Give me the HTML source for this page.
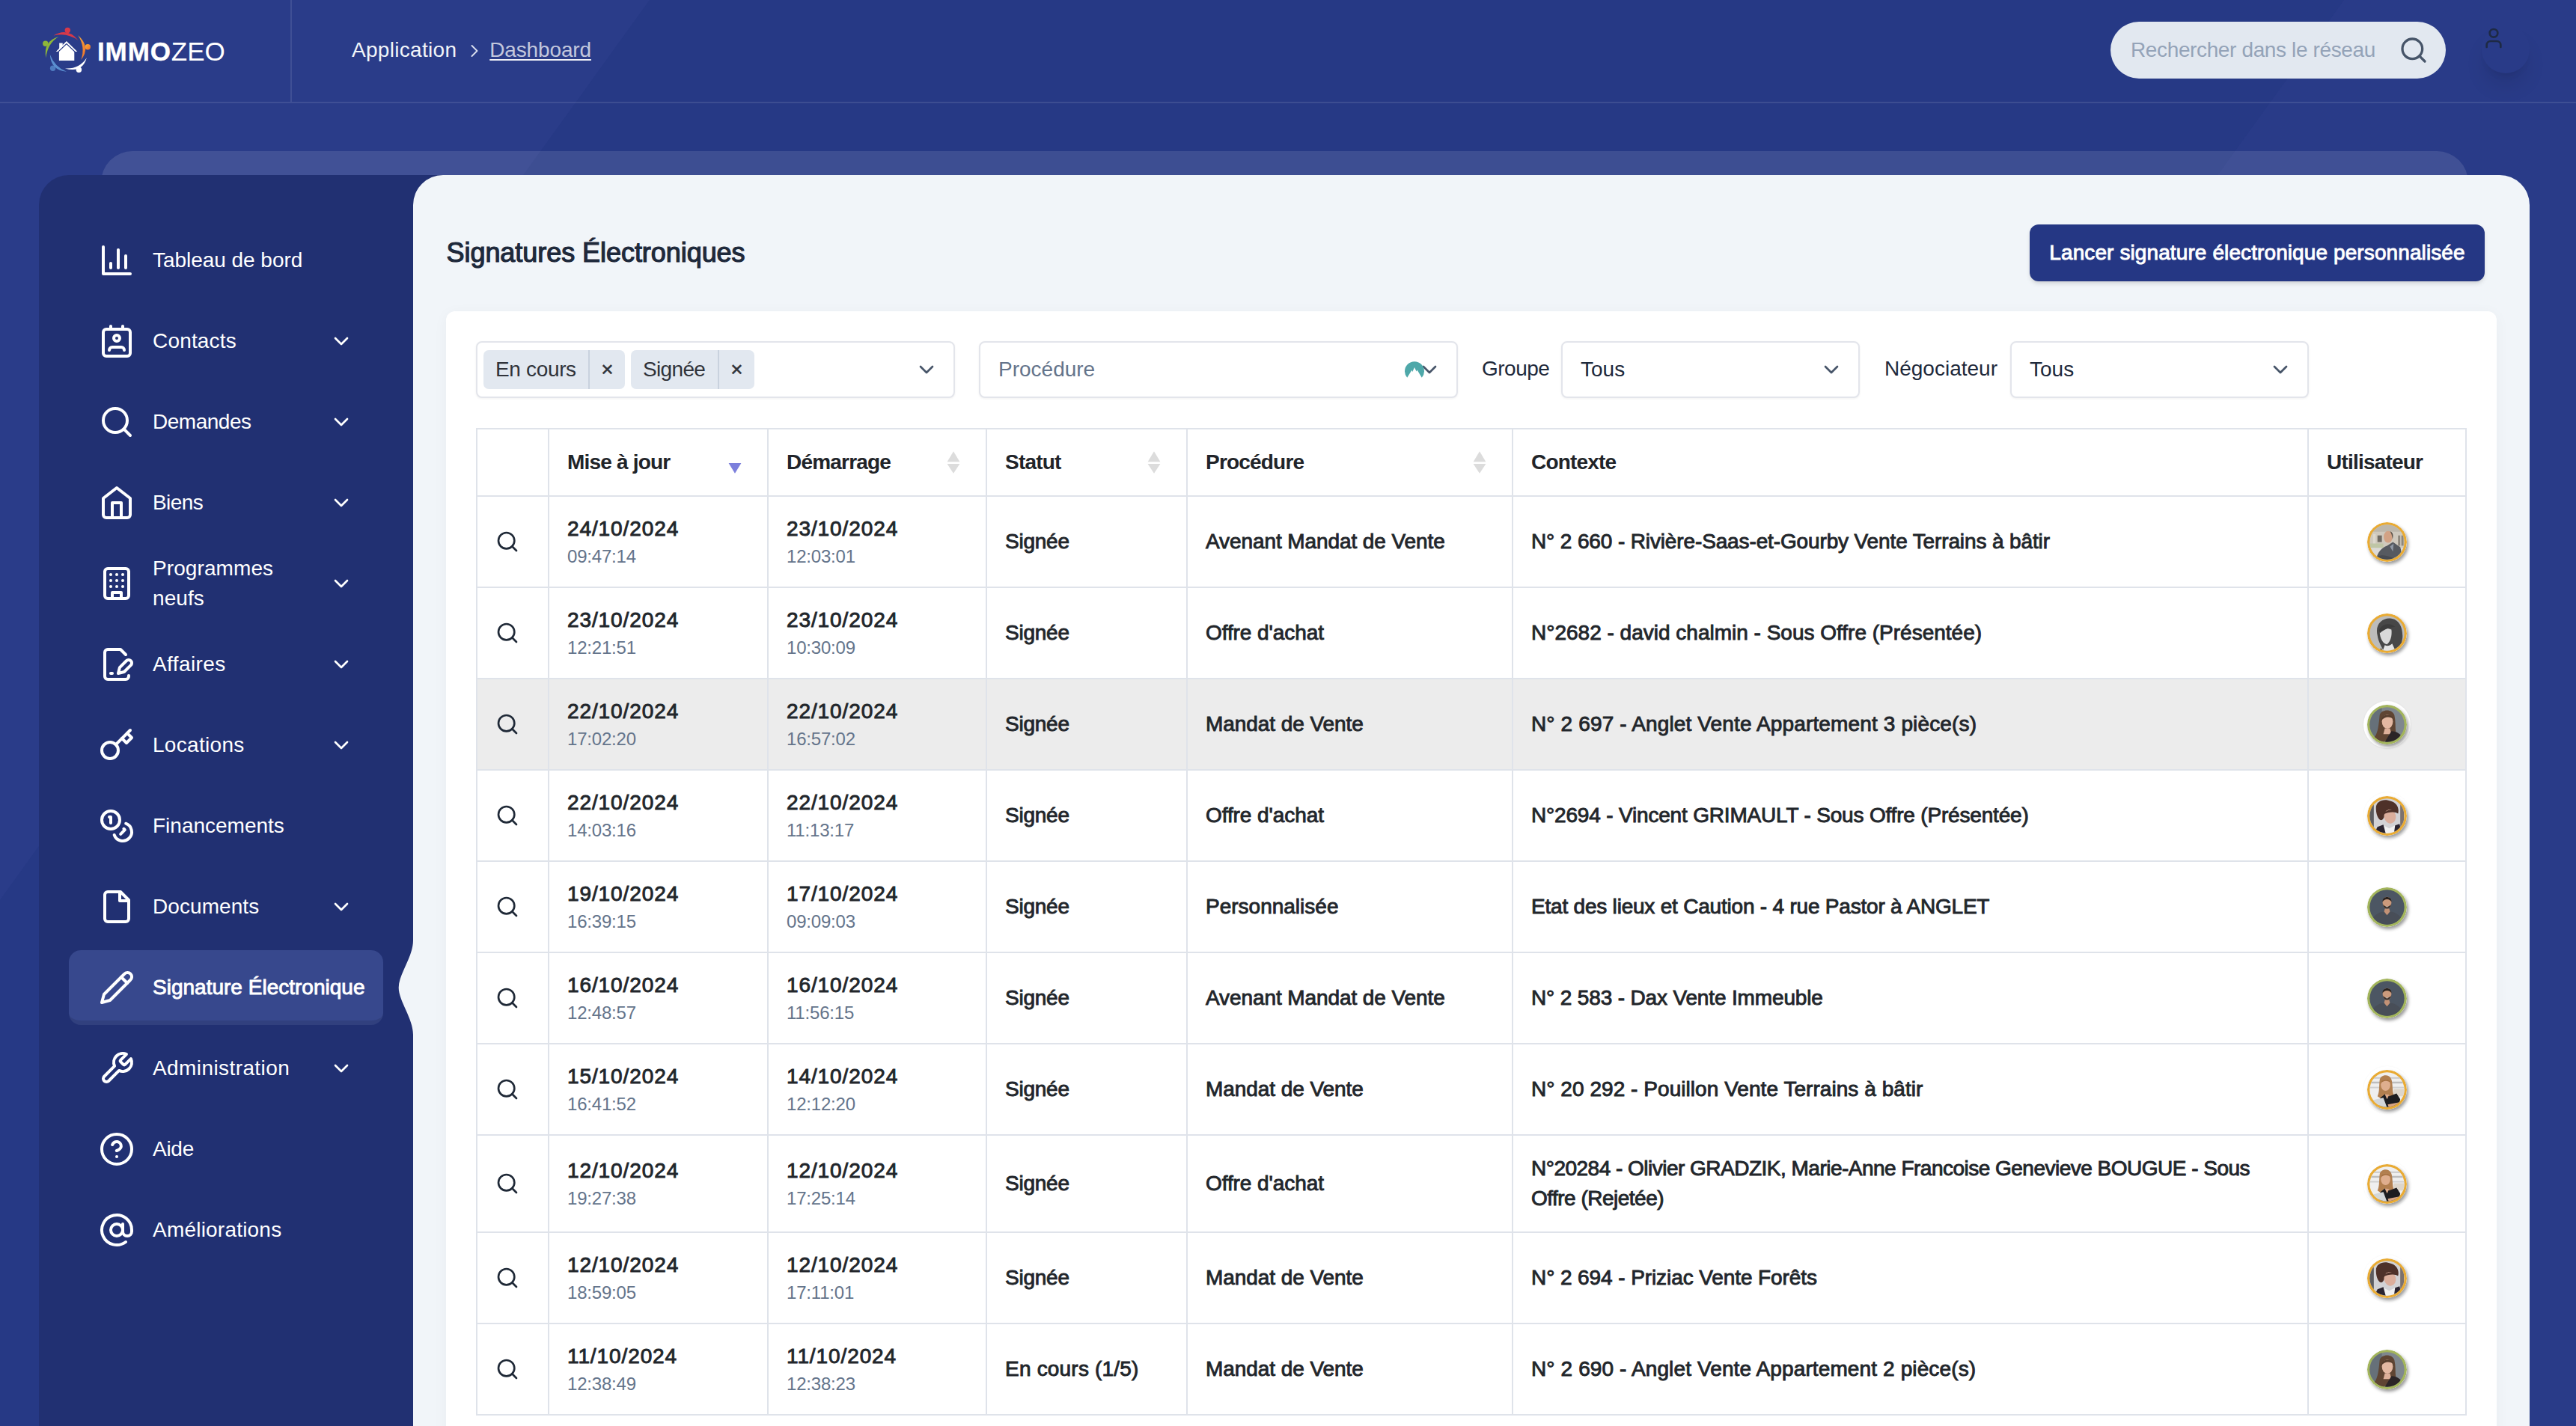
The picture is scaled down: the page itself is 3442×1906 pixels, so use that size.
<!DOCTYPE html>
<html lang="fr"><head><meta charset="utf-8"><title>IMMOZEO - Signatures Électroniques</title>
<style>
*{box-sizing:border-box}
html,body{margin:0;padding:0}
body{width:3442px;height:1906px;overflow:hidden;position:relative;background:#263985;font-family:"Liberation Sans",sans-serif;font-size:28px;color:#1e293b}
.abs{position:absolute}
.ic{display:block}
#bg{position:absolute;left:0;top:0}
#topbar{position:absolute;left:0;top:0;width:3442px;height:138px;border-bottom:2px solid rgba(255,255,255,.1)}
#logo{position:absolute;left:0;top:0;width:390px;height:136px;border-right:2px solid rgba(255,255,255,.1)}
#logotxt{position:absolute;left:130px;top:47px;-webkit-text-stroke:.4px #fff;font-size:35px;line-height:44px;color:#fff;font-weight:700;white-space:nowrap;letter-spacing:.9px}
#logotxt span{font-weight:400;letter-spacing:0;-webkit-text-stroke:0}
#bc{position:absolute;left:470px;top:46.6px;height:40px;line-height:40px;color:#f1f5f9;white-space:nowrap;font-size:28px}
#bc .cur{color:rgba(255,255,255,.72);text-decoration:underline;text-decoration-thickness:2px;text-underline-offset:3px;text-decoration-color:rgba(255,255,255,.92);letter-spacing:-.15px}
#bc .app{letter-spacing:.3px}
#search{position:absolute;left:2820px;top:29px;width:448px;height:76px;border-radius:38px;background:#e2e8f0}
#search .ph{position:absolute;left:27px;top:16px;line-height:44px;font-size:28px;color:#94a3b8;white-space:nowrap;letter-spacing:-.37px}
#search svg{position:absolute;left:385px;top:18px;color:#475569}
#usr{position:absolute;left:3316px;top:34px;width:64px;height:64px;border-radius:50%;box-shadow:0 20px 30px -6px rgba(0,0,0,.12),0 8px 12px -8px rgba(0,0,0,.1)}
#usr svg{position:absolute;left:0;top:1px;color:#1e2a44}
#strip{position:absolute;left:135px;top:202px;width:3163px;height:80px;border-radius:42px 42px 0 0;background:rgba(255,255,255,.11)}
#side{position:absolute;left:52px;top:234px;width:540px;height:1700px;border-radius:40px 0 0 0;background:#213072}
#content{position:absolute;left:552px;top:234px;width:2828px;height:1800px;border-radius:40px;background:#f1f5f9}
.mi{position:absolute;left:92px;width:420px;height:100px;border-radius:16px;color:#fff;font-size:28px;line-height:40px}
.mi .ico{position:absolute;left:40px;top:26px}
.mi .t{position:absolute;left:112px;top:50%;transform:translateY(-50%);white-space:nowrap}
.mi .ch{position:absolute;left:348px;top:34px}
.mi.act{background:#37488d;font-weight:400}
.mi.act:before{content:"";box-sizing:border-box;position:absolute;left:0;top:0;width:100%;height:100%;border-radius:16px;border-bottom:6px solid rgba(0,0,0,.1)}
.mi.act .t{-webkit-text-stroke:.9px #fff}
#notch{position:absolute;left:532px;top:1254.7px}
h2{position:absolute;left:596.5px;top:313.5px;margin:0;font-size:36px;line-height:48px;font-weight:400;-webkit-text-stroke:1.2px #1e293b;letter-spacing:-.05px;color:#1e293b;white-space:nowrap}
#btn{position:absolute;left:2712px;top:300px;width:608px;height:76px;border-radius:12px;background:#253784;color:#fff;text-align:center;line-height:75px;letter-spacing:.1px;font-size:28px;-webkit-text-stroke:.9px #fff;white-space:nowrap;box-shadow:0 4px 6px -1px rgba(0,0,0,.12),0 2px 4px -2px rgba(0,0,0,.1)}
#box{position:absolute;left:596px;top:416px;width:2740px;height:1600px;border-radius:12px;background:#fff;box-shadow:0 3px 20px rgba(0,0,0,.04)}
.sel{position:absolute;top:456px;height:76px;border:2px solid #e3e5eb;border-radius:8px;background:#fff;box-shadow:0 1px 3px rgba(0,0,0,.06);font-size:28px;line-height:71px;color:#1e293b;white-space:nowrap}
.sel .v{position:absolute;left:24px;top:0}
.sel .ph{color:#64748b}
.sel svg{position:absolute;top:20.3px;color:#475569;margin-left:1px}
.lbl{position:absolute;top:473px;line-height:40px;font-size:28px;color:#1e293b;white-space:nowrap}
.tag{position:absolute;top:10px;height:52px;border-radius:7px;background:#e2e8f0;line-height:52px;font-size:28px;color:#30333a}
.tag .x{position:absolute;top:0;right:0;width:49px;height:52px;border-left:2px solid #c9d2de;text-align:center;font-size:28px;-webkit-text-stroke:.5px #30333a}
table{position:absolute;left:636px;top:572px;border-collapse:collapse;table-layout:fixed;width:2660px}
td,th{border:2px solid #dfe3ea;padding:0 0 0 24px;text-align:left;vertical-align:middle;font-size:28px;line-height:40px;color:#22262b;font-weight:400}
th{height:90px;font-weight:700;color:#212429;position:relative;letter-spacing:-.8px}
td{-webkit-text-stroke:.9px #22262b;padding-bottom:0;letter-spacing:-.1px}
td.dt{padding-bottom:1px}
td .d{letter-spacing:.9px;position:relative;top:-1.5px}
td .tm{display:block;font-size:24px;line-height:30px;color:#64748b;-webkit-text-stroke:0;margin-top:0;letter-spacing:-.2px}
td.c0{padding:0 0 0 24px}
td.c0 svg{margin:0;color:#1f2937}
td.cu{padding:0;text-align:center}
.av{display:block;margin:0 auto;border-radius:50%;box-shadow:2px 3px 4px rgba(0,0,0,.4)}
.av.fr{box-shadow:2px 3px 4px rgba(0,0,0,.4),0 0 0 5px #fff,0 0 2px 5px rgba(0,0,0,.05)}
.av.ring{box-shadow:2px 3px 4px rgba(0,0,0,.4),0 0 0 5px #fff,0 0 3px 5px rgba(0,0,0,.06)}
tr.hl td{background:#ececec}
td.c0{padding-bottom:0}
.sa{position:absolute;right:34px;top:28px;width:18px;height:32px}
</style></head><body>
<svg id="bg" width="3442" height="1906" viewBox="0 0 3442 1906"><polygon points="0,0 868,0 0,1203" fill="#2a3c89"/><polygon points="3132,0 3442,0 3442,1906 1757,1906" fill="#293b88"/></svg>
<div id="topbar"><div id="logo"><svg class="abs" style="left:50px;top:30px" width="80" height="75" viewBox="50 30 80 75">
<defs><linearGradient id="go" x1="0" y1="0" x2="1" y2="1"><stop offset="0" stop-color="#f6b23c"/><stop offset="1" stop-color="#ee6b2a"/></linearGradient></defs>
<circle cx="90.3" cy="40.4" r="3.7" fill="#d6394a"/><path d="M71.5 47.6 Q90 36 104.6 53.9 Q89 43 71.5 47.6Z" fill="#d6394a"/>
<circle cx="117.3" cy="62.7" r="3.7" fill="url(#go)"/><path d="M104.3 47.3 Q122 63 108.2 80 Q114.5 63 104.3 47.3Z" fill="url(#go)"/>
<circle cx="105.4" cy="93.2" r="3.7" fill="#fff"/><path d="M115.8 77.2 Q110 98 86.8 91.4 Q106 92.5 115.8 77.2Z" fill="#fff"/>
<circle cx="70.6" cy="91.3" r="3.7" fill="#4f7cc0"/><path d="M66.8 73 Q68 94 89 95.8 Q73.5 90 66.8 73Z" fill="#5b8fd0"/>
<circle cx="60.8" cy="58.2" r="3.7" fill="#8db63a"/><path d="M78.4 49.1 Q57.5 55 61.3 77.6 Q63.5 58 78.4 49.1Z" fill="#8db63a"/>
<path d="M74.8 69 L88.9 54.9 L103.3 69 L99.3 69 L99.3 80.9 L78.9 80.9 L78.9 69Z" fill="#fff"/>
<path d="M79.2 57.6h4.5v4.6l-4.5 4.4z" fill="#fff"/>
<path d="M77.5 69.5 L88.9 58.6 L100.4 69.5" fill="none" stroke="#2a3c89" stroke-width="1.1"/>
</svg><div id="logotxt">IMMO<span>ZEO</span></div></div>
<div id="bc"><span class="app">Application</span><svg class="ic " style="display:inline-block;vertical-align:-6px;margin:0 6px 0 10px;color:#dbe0f0" width="28" height="28" viewBox="0 0 24 24" fill="none" stroke="currentColor" stroke-width="1.6" stroke-linecap="round" stroke-linejoin="round"><path d="m9 18 6-6-6-6"/></svg><span class="cur">Dashboard</span></div>
<div id="search"><div class="ph">Rechercher dans le réseau</div><svg class="ic " style="" width="40" height="40" viewBox="0 0 24 24" fill="none" stroke="currentColor" stroke-width="2" stroke-linecap="round" stroke-linejoin="round"><circle cx="11" cy="11" r="8"/><path d="m21 21-4.3-4.3"/></svg></div>
<div id="usr"><svg class="ic " style="" width="32" height="32" viewBox="0 0 24 24" fill="none" stroke="currentColor" stroke-width="2" stroke-linecap="round" stroke-linejoin="round"><path d="M19 21v-2a4 4 0 0 0-4-4H9a4 4 0 0 0-4 4v2"/><circle cx="12" cy="7" r="4"/></svg></div>
</div>
<div id="strip"></div>
<div id="side"></div>
<div id="content"></div>
<div class="mi" style="top:298px"><span class="ico"><svg class="ic " style="" width="48" height="48" viewBox="0 0 24 24" fill="none" stroke="currentColor" stroke-width="2" stroke-linecap="round" stroke-linejoin="round"><path d="M3 3v18h18"/><path d="M18 17V9"/><path d="M13 17V5"/><path d="M8 17v-3"/></svg></span><span class="t" style="letter-spacing:-0.04px">Tableau de bord</span></div>
<div class="mi" style="top:406px"><span class="ico"><svg class="ic " style="" width="48" height="48" viewBox="0 0 24 24" fill="none" stroke="currentColor" stroke-width="2" stroke-linecap="round" stroke-linejoin="round"><path d="M17 18a2 2 0 0 0-2-2H9a2 2 0 0 0-2 2"/><rect width="18" height="18" x="3" y="4" rx="2"/><circle cx="12" cy="10" r="2"/><line x1="8" x2="8" y1="2" y2="4"/><line x1="16" x2="16" y1="2" y2="4"/></svg></span><span class="t" style="letter-spacing:0.17px">Contacts</span><svg class="ic ch" style="" width="32" height="32" viewBox="0 0 24 24" fill="none" stroke="currentColor" stroke-width="2" stroke-linecap="round" stroke-linejoin="round"><path d="m6 9 6 6 6-6"/></svg></div>
<div class="mi" style="top:514px"><span class="ico"><svg class="ic " style="" width="48" height="48" viewBox="0 0 24 24" fill="none" stroke="currentColor" stroke-width="2" stroke-linecap="round" stroke-linejoin="round"><circle cx="11" cy="11" r="8"/><path d="m21 21-4.3-4.3"/></svg></span><span class="t" style="letter-spacing:-0.49px">Demandes</span><svg class="ic ch" style="" width="32" height="32" viewBox="0 0 24 24" fill="none" stroke="currentColor" stroke-width="2" stroke-linecap="round" stroke-linejoin="round"><path d="m6 9 6 6 6-6"/></svg></div>
<div class="mi" style="top:622px"><span class="ico"><svg class="ic " style="" width="48" height="48" viewBox="0 0 24 24" fill="none" stroke="currentColor" stroke-width="2" stroke-linecap="round" stroke-linejoin="round"><path d="m3 9 9-7 9 7v11a2 2 0 0 1-2 2H5a2 2 0 0 1-2-2z"/><polyline points="9 22 9 12 15 12 15 22"/></svg></span><span class="t" style="letter-spacing:-0.60px">Biens</span><svg class="ic ch" style="" width="32" height="32" viewBox="0 0 24 24" fill="none" stroke="currentColor" stroke-width="2" stroke-linecap="round" stroke-linejoin="round"><path d="m6 9 6 6 6-6"/></svg></div>
<div class="mi" style="top:730px"><span class="ico"><svg class="ic " style="" width="48" height="48" viewBox="0 0 24 24" fill="none" stroke="currentColor" stroke-width="2" stroke-linecap="round" stroke-linejoin="round"><rect width="16" height="20" x="4" y="2" rx="2" ry="2"/><path d="M9 22v-4h6v4"/><path d="M8 6h.01"/><path d="M16 6h.01"/><path d="M12 6h.01"/><path d="M12 10h.01"/><path d="M12 14h.01"/><path d="M16 10h.01"/><path d="M16 14h.01"/><path d="M8 10h.01"/><path d="M8 14h.01"/></svg></span><span class="t" style="letter-spacing:0.09px">Programmes<br>neufs</span><svg class="ic ch" style="" width="32" height="32" viewBox="0 0 24 24" fill="none" stroke="currentColor" stroke-width="2" stroke-linecap="round" stroke-linejoin="round"><path d="m6 9 6 6 6-6"/></svg></div>
<div class="mi" style="top:838px"><span class="ico"><svg class="ic " style="" width="48" height="48" viewBox="0 0 24 24" fill="none" stroke="currentColor" stroke-width="2" stroke-linecap="round" stroke-linejoin="round"><path d="M20 19.5v.5a2 2 0 0 1-2 2H6a2 2 0 0 1-2-2V4a2 2 0 0 1 2-2h8.5L18 5.5"/><path d="M8 18h1"/><path d="M18.42 9.61a2.1 2.1 0 1 1 2.97 2.97L16.95 17 13 18l.99-3.95 4.43-4.44Z"/></svg></span><span class="t" style="letter-spacing:0.40px">Affaires</span><svg class="ic ch" style="" width="32" height="32" viewBox="0 0 24 24" fill="none" stroke="currentColor" stroke-width="2" stroke-linecap="round" stroke-linejoin="round"><path d="m6 9 6 6 6-6"/></svg></div>
<div class="mi" style="top:946px"><span class="ico"><svg class="ic " style="" width="48" height="48" viewBox="0 0 24 24" fill="none" stroke="currentColor" stroke-width="2" stroke-linecap="round" stroke-linejoin="round"><circle cx="7.5" cy="15.5" r="5.5"/><path d="m21 2-9.6 9.6"/><path d="m15.5 7.5 3 3L22 7l-3-3"/></svg></span><span class="t" style="letter-spacing:0.30px">Locations</span><svg class="ic ch" style="" width="32" height="32" viewBox="0 0 24 24" fill="none" stroke="currentColor" stroke-width="2" stroke-linecap="round" stroke-linejoin="round"><path d="m6 9 6 6 6-6"/></svg></div>
<div class="mi" style="top:1054px"><span class="ico"><svg class="ic " style="" width="48" height="48" viewBox="0 0 24 24" fill="none" stroke="currentColor" stroke-width="2" stroke-linecap="round" stroke-linejoin="round"><circle cx="8" cy="8" r="6"/><path d="M18.09 10.37A6 6 0 1 1 10.34 18"/><path d="M7 6h1v4"/><path d="m16.71 13.88.7.71-2.82 2.82"/></svg></span><span class="t" style="letter-spacing:0.00px">Financements</span></div>
<div class="mi" style="top:1162px"><span class="ico"><svg class="ic " style="" width="48" height="48" viewBox="0 0 24 24" fill="none" stroke="currentColor" stroke-width="2" stroke-linecap="round" stroke-linejoin="round"><path d="M14.5 2H6a2 2 0 0 0-2 2v16a2 2 0 0 0 2 2h12a2 2 0 0 0 2-2V7.5L14.5 2z"/><polyline points="14 2 14 8 20 8"/></svg></span><span class="t" style="letter-spacing:0.07px">Documents</span><svg class="ic ch" style="" width="32" height="32" viewBox="0 0 24 24" fill="none" stroke="currentColor" stroke-width="2" stroke-linecap="round" stroke-linejoin="round"><path d="m6 9 6 6 6-6"/></svg></div>
<div class="mi act" style="top:1270px"><span class="ico"><svg class="ic " style="" width="48" height="48" viewBox="0 0 24 24" fill="none" stroke="currentColor" stroke-width="2" stroke-linecap="round" stroke-linejoin="round"><path d="M17 3a2.85 2.83 0 1 1 4 4L7.5 20.5 2 22l1.5-5.5Z"/><path d="m15 5 4 4"/></svg></span><span class="t" style="letter-spacing:0.01px">Signature Électronique</span></div>
<div class="mi" style="top:1378px"><span class="ico"><svg class="ic " style="" width="48" height="48" viewBox="0 0 24 24" fill="none" stroke="currentColor" stroke-width="2" stroke-linecap="round" stroke-linejoin="round"><path d="M14.7 6.3a1 1 0 0 0 0 1.4l1.6 1.6a1 1 0 0 0 1.4 0l3.77-3.77a6 6 0 0 1-7.94 7.94l-6.91 6.91a2.12 2.12 0 0 1-3-3l6.91-6.91a6 6 0 0 1 7.94-7.94l-3.76 3.76z"/></svg></span><span class="t" style="letter-spacing:0.41px">Administration</span><svg class="ic ch" style="" width="32" height="32" viewBox="0 0 24 24" fill="none" stroke="currentColor" stroke-width="2" stroke-linecap="round" stroke-linejoin="round"><path d="m6 9 6 6 6-6"/></svg></div>
<div class="mi" style="top:1486px"><span class="ico"><svg class="ic " style="" width="48" height="48" viewBox="0 0 24 24" fill="none" stroke="currentColor" stroke-width="2" stroke-linecap="round" stroke-linejoin="round"><circle cx="12" cy="12" r="10"/><path d="M9.09 9a3 3 0 0 1 5.83 1c0 2-3 3-3 3"/><path d="M12 17h.01"/></svg></span><span class="t" style="letter-spacing:-0.27px">Aide</span></div>
<div class="mi" style="top:1594px"><span class="ico"><svg class="ic " style="" width="48" height="48" viewBox="0 0 24 24" fill="none" stroke="currentColor" stroke-width="2" stroke-linecap="round" stroke-linejoin="round"><circle cx="12" cy="12" r="4"/><path d="M16 8v5a3 3 0 0 0 6 0v-1a10 10 0 1 0-4 8"/></svg></span><span class="t" style="letter-spacing:0.21px">Améliorations</span></div>
<svg id="notch" width="24" height="130" viewBox="0 0 24 130"><path d="M20 2 C20 24 0.7 47 0.7 65 C0.7 83 20 106 20 128 L24 128 L24 2 Z" fill="#f1f5f9"/></svg>
<h2>Signatures Électroniques</h2>
<div id="btn">Lancer signature électronique personnalisée</div>
<div id="box"></div>
<div class="sel" style="left:636px;width:640px"><div class="tag" style="left:8px;width:189px"><span style="padding-left:16px;letter-spacing:-.34px">En cours</span><span class="x">×</span></div><div class="tag" style="left:205px;width:165px"><span style="padding-left:16px;letter-spacing:-.66px">Signée</span><span class="x">×</span></div><svg class="ic " style="left:583px" width="32" height="32" viewBox="0 0 24 24" fill="none" stroke="currentColor" stroke-width="2" stroke-linecap="round" stroke-linejoin="round"><path d="m6 9 6 6 6-6"/></svg></div>
<div class="sel" style="left:1308px;width:640px"><div class="v ph">Procédure</div><svg class="ic " style="left:583px" width="32" height="32" viewBox="0 0 24 24" fill="none" stroke="currentColor" stroke-width="2" stroke-linecap="round" stroke-linejoin="round"><path d="m6 9 6 6 6-6"/></svg><svg style="left:566px;top:25px" width="26" height="26" viewBox="0 0 26 26"><path d="M3.2 21.8 A13 13 0 1 1 22.8 21.8 L16.6 11.6 L15.6 13.6 L13 8 L10.3 14 L9.4 11.8 Z" fill="#4ea8a9"/></svg></div>
<div class="lbl" style="left:1980px;letter-spacing:-.5px">Groupe</div>
<div class="sel" style="left:2086px;width:399px"><div class="v">Tous</div><svg class="ic " style="left:342px" width="32" height="32" viewBox="0 0 24 24" fill="none" stroke="currentColor" stroke-width="2" stroke-linecap="round" stroke-linejoin="round"><path d="m6 9 6 6 6-6"/></svg></div>
<div class="lbl" style="left:2518px">Négociateur</div>
<div class="sel" style="left:2686px;width:399px"><div class="v">Tous</div><svg class="ic " style="left:342px" width="32" height="32" viewBox="0 0 24 24" fill="none" stroke="currentColor" stroke-width="2" stroke-linecap="round" stroke-linejoin="round"><path d="m6 9 6 6 6-6"/></svg></div>
<table><colgroup><col style="width:96px"><col style="width:293px"><col style="width:292px"><col style="width:268px"><col style="width:435px"><col style="width:1063px"><col style="width:211px"></colgroup>
<tr><th></th><th>Mise à jour<svg class="sa" viewBox="0 0 18 32"><path d="M0.6 17h16.8l-8.4 13.8z" fill="#7c7fdc"/></svg></th><th>Démarrage<svg class="sa" viewBox="0 0 18 32"><path d="M0.6 15.3h16.8l-8.4-14z" fill="#dcdcdc"/><path d="M0.6 18h16.8l-8.4 12.8z" fill="#dcdcdc"/></svg></th><th>Statut<svg class="sa" viewBox="0 0 18 32"><path d="M0.6 15.3h16.8l-8.4-14z" fill="#dcdcdc"/><path d="M0.6 18h16.8l-8.4 12.8z" fill="#dcdcdc"/></svg></th><th>Procédure<svg class="sa" viewBox="0 0 18 32"><path d="M0.6 15.3h16.8l-8.4-14z" fill="#dcdcdc"/><path d="M0.6 18h16.8l-8.4 12.8z" fill="#dcdcdc"/></svg></th><th>Contexte</th><th>Utilisateur</th></tr>
<tr style="height:122px"><td class="c0"><svg class="ic " style="" width="32" height="32" viewBox="0 0 24 24" fill="none" stroke="currentColor" stroke-width="2" stroke-linecap="round" stroke-linejoin="round"><circle cx="11" cy="11" r="8"/><path d="m21 21-4.3-4.3"/></svg></td><td class="dt"><span class="d">24/10/2024</span><span class="tm">09:47:14</span></td><td class="dt"><span class="d">23/10/2024</span><span class="tm">12:03:01</span></td><td><span style="letter-spacing:-0.24px">Signée</span></td><td><span style="letter-spacing:-0.09px">Avenant Mandat de Vente</span></td><td style="padding-right:24px"><span style="letter-spacing:-0.13px">N° 2 660 - Rivière-Saas-et-Gourby Vente Terrains à bâtir</span></td><td class="cu"><svg class="av" width="53" height="53" viewBox="0 0 54 54"><clipPath id="av1"><circle cx="27" cy="27" r="23.6"/></clipPath><circle cx="27" cy="27" r="27" fill="#e9ab34"/><g clip-path="url(#av1)"><rect width="54" height="54" fill="#cfc9bd"/><rect y="3" width="54" height="10" fill="#bdb7ab"/><rect x="8" y="16" width="3.5" height="22" fill="#ddd8cd"/><rect x="14" y="18" width="6" height="9" fill="#6f6a62"/><rect x="42" y="18" width="3" height="14" fill="#8d877c"/><rect x="46.5" y="18" width="3" height="14" fill="#8d877c"/><rect y="29" width="22" height="6" fill="#bfc6a6"/><rect y="35" width="54" height="19" fill="#dcdad6"/><path d="M12 52 C13 42 20 34 27 32 L35 27 L45 34 C47 40 47 48 46 54 L20 56 Z" fill="#565a60"/><path d="M31 33 L36 29 L35 40 Z" fill="#8f98a5"/><path d="M14 47 C20 43 30 46 38 50 L30 54 L16 53 Z" fill="#474b51"/><ellipse cx="28.5" cy="20" rx="6" ry="8" fill="#d2a284"/><path d="M31 12.5 C35 13 36 18 34.5 23 C34 19 33 15 31 12.5Z" fill="#5d5248"/></g></svg></td></tr>
<tr style="height:122px"><td class="c0"><svg class="ic " style="" width="32" height="32" viewBox="0 0 24 24" fill="none" stroke="currentColor" stroke-width="2" stroke-linecap="round" stroke-linejoin="round"><circle cx="11" cy="11" r="8"/><path d="m21 21-4.3-4.3"/></svg></td><td class="dt"><span class="d">23/10/2024</span><span class="tm">12:21:51</span></td><td class="dt"><span class="d">23/10/2024</span><span class="tm">10:30:09</span></td><td><span style="letter-spacing:-0.24px">Signée</span></td><td><span style="letter-spacing:-0.08px">Offre d'achat</span></td><td style="padding-right:24px"><span style="letter-spacing:0.00px">N°2682 - david chalmin - Sous Offre (Présentée)</span></td><td class="cu"><svg class="av" width="53" height="53" viewBox="0 0 54 54"><clipPath id="av2"><circle cx="27" cy="27" r="23.6"/></clipPath><circle cx="27" cy="27" r="27" fill="#e9ab34"/><g clip-path="url(#av2)"><rect width="54" height="54" fill="#bcbcbc"/><path d="M14 30 C10 14 22 5 33 7 C46 9 49 24 48 34 C47 42 44 48 40 52 L30 46 L22 50 C19 44 15 38 14 30Z" fill="#474747"/><path d="M17 24 C20 20 28 19 33 22 C34 30 32 38 27 42 C22 42 17 34 17 24Z" fill="#d9d9d9"/><path d="M16 23 C20 14 30 12 38 18 C33 19 24 20 17 27Z" fill="#3c3c3c"/><path d="M20 54 L24 43 C27 45 31 44 34 41 L40 54Z" fill="#e4e4e4"/><path d="M14 54 L19 47 L22 54Z M38 54 L40 47 L46 52Z" fill="#222"/></g></svg></td></tr>
<tr class="hl" style="height:122px"><td class="c0"><svg class="ic " style="" width="32" height="32" viewBox="0 0 24 24" fill="none" stroke="currentColor" stroke-width="2" stroke-linecap="round" stroke-linejoin="round"><circle cx="11" cy="11" r="8"/><path d="m21 21-4.3-4.3"/></svg></td><td class="dt"><span class="d">22/10/2024</span><span class="tm">17:02:20</span></td><td class="dt"><span class="d">22/10/2024</span><span class="tm">16:57:02</span></td><td><span style="letter-spacing:-0.24px">Signée</span></td><td><span style="letter-spacing:-0.06px">Mandat de Vente</span></td><td style="padding-right:24px"><span style="letter-spacing:0.14px">N° 2 697 - Anglet Vente Appartement 3 pièce(s)</span></td><td class="cu"><svg class="av ring" width="53" height="53" viewBox="0 0 54 54"><clipPath id="av3"><circle cx="27" cy="27" r="23.6"/></clipPath><circle cx="27" cy="27" r="27" fill="#a3b55c"/><g clip-path="url(#av3)"><rect width="54" height="54" fill="#7f878e"/><rect width="20" height="54" fill="#667079"/><path d="M17 14 C19 6 34 5 37 14 C39 22 38 30 39 38 L30 46 L20 52 L10 44 C15 38 16 24 17 14Z" fill="#5f4533"/><ellipse cx="27.5" cy="23" rx="7.5" ry="9.5" fill="#e3b8a2"/><path d="M19 22 C20 12 33 11 36 20 C32 16 24 15 19 22Z" fill="#553d2d"/><path d="M24 32 L31 32 L33 40 L22 40Z" fill="#ddb09a"/><path d="M22 54 L28 44 L33 36 C40 36 46 40 48 46 L44 54Z" fill="#2b2527"/><path d="M10 44 C15 40 20 40 24 42 L22 54 L12 54Z" fill="#5f4533"/></g></svg></td></tr>
<tr style="height:122px"><td class="c0"><svg class="ic " style="" width="32" height="32" viewBox="0 0 24 24" fill="none" stroke="currentColor" stroke-width="2" stroke-linecap="round" stroke-linejoin="round"><circle cx="11" cy="11" r="8"/><path d="m21 21-4.3-4.3"/></svg></td><td class="dt"><span class="d">22/10/2024</span><span class="tm">14:03:16</span></td><td class="dt"><span class="d">22/10/2024</span><span class="tm">11:13:17</span></td><td><span style="letter-spacing:-0.24px">Signée</span></td><td><span style="letter-spacing:-0.08px">Offre d'achat</span></td><td style="padding-right:24px"><span style="letter-spacing:-0.18px">N°2694 - Vincent GRIMAULT - Sous Offre (Présentée)</span></td><td class="cu"><svg class="av fr" width="53" height="53" viewBox="0 0 54 54"><clipPath id="av4"><circle cx="27" cy="27" r="23.6"/></clipPath><circle cx="27" cy="27" r="27" fill="#e9ab34"/><g clip-path="url(#av4)"><rect width="54" height="54" fill="#d2d2d5"/><rect width="9" height="54" fill="#5c5c60"/><rect x="45" width="5" height="54" fill="#7b716d"/><path d="M12 16 C12 6 24 3 32 7 C40 9 44 16 42 24 C36 20 28 20 24 26 C22 32 20 34 17 32 C13 28 12 22 12 16Z" fill="#4e3129"/><ellipse cx="31" cy="28" rx="8" ry="9.5" fill="#dbae9c" transform="rotate(-12 31 28)"/><path d="M22 25 C25 18 36 17 41 23 C35 21 28 22 22 25Z" fill="#4e3129"/><path d="M18 54 L22 40 L30 44 L38 40 L42 54Z" fill="#f1f1f1"/><path d="M8 54 L14 42 L22 39 L26 54Z M36 54 L38 40 L44 38 L48 54Z" fill="#2a2430"/></g></svg></td></tr>
<tr style="height:122px"><td class="c0"><svg class="ic " style="" width="32" height="32" viewBox="0 0 24 24" fill="none" stroke="currentColor" stroke-width="2" stroke-linecap="round" stroke-linejoin="round"><circle cx="11" cy="11" r="8"/><path d="m21 21-4.3-4.3"/></svg></td><td class="dt"><span class="d">19/10/2024</span><span class="tm">16:39:15</span></td><td class="dt"><span class="d">17/10/2024</span><span class="tm">09:09:03</span></td><td><span style="letter-spacing:-0.24px">Signée</span></td><td><span style="letter-spacing:0.00px">Personnalisée</span></td><td style="padding-right:24px"><span style="letter-spacing:-0.21px">Etat des lieux et Caution - 4 rue Pastor à ANGLET</span></td><td class="cu"><svg class="av" width="53" height="53" viewBox="0 0 54 54"><clipPath id="av5"><circle cx="27" cy="27" r="23.6"/></clipPath><circle cx="27" cy="27" r="27" fill="#a3b55c"/><g clip-path="url(#av5)"><rect width="54" height="54" fill="#4c5663"/><path d="M4 54 C5 40 14 34 22 33 L32 33 C40 34 49 40 50 54Z" fill="#484e58"/><path d="M23 33 L27 38 L31 33 L30 29 L24 29Z" fill="#c39276"/><ellipse cx="27" cy="21" rx="6" ry="8" fill="#cb9a7c"/><path d="M21 20 C20 11 34 11 33 20 C31 15 23 15 21 20Z" fill="#2b231e"/><path d="M21.5 23 C22 31 32 31 32.5 23 C31 27 23 27 21.5 23Z" fill="#3a2e27"/><path d="M24.5 25 C26 26.5 28 26.5 29.5 25 C28 27.5 26 27.5 24.5 25Z" fill="#f2ece8"/></g></svg></td></tr>
<tr style="height:122px"><td class="c0"><svg class="ic " style="" width="32" height="32" viewBox="0 0 24 24" fill="none" stroke="currentColor" stroke-width="2" stroke-linecap="round" stroke-linejoin="round"><circle cx="11" cy="11" r="8"/><path d="m21 21-4.3-4.3"/></svg></td><td class="dt"><span class="d">16/10/2024</span><span class="tm">12:48:57</span></td><td class="dt"><span class="d">16/10/2024</span><span class="tm">11:56:15</span></td><td><span style="letter-spacing:-0.24px">Signée</span></td><td><span style="letter-spacing:-0.09px">Avenant Mandat de Vente</span></td><td style="padding-right:24px"><span style="letter-spacing:-0.15px">N° 2 583 - Dax Vente Immeuble</span></td><td class="cu"><svg class="av" width="53" height="53" viewBox="0 0 54 54"><clipPath id="av6"><circle cx="27" cy="27" r="23.6"/></clipPath><circle cx="27" cy="27" r="27" fill="#a3b55c"/><g clip-path="url(#av6)"><rect width="54" height="54" fill="#4c5663"/><path d="M4 54 C5 40 14 34 22 33 L32 33 C40 34 49 40 50 54Z" fill="#484e58"/><path d="M23 33 L27 38 L31 33 L30 29 L24 29Z" fill="#c39276"/><ellipse cx="27" cy="21" rx="6" ry="8" fill="#cb9a7c"/><path d="M21 20 C20 11 34 11 33 20 C31 15 23 15 21 20Z" fill="#2b231e"/><path d="M21.5 23 C22 31 32 31 32.5 23 C31 27 23 27 21.5 23Z" fill="#3a2e27"/><path d="M24.5 25 C26 26.5 28 26.5 29.5 25 C28 27.5 26 27.5 24.5 25Z" fill="#f2ece8"/></g></svg></td></tr>
<tr style="height:122px"><td class="c0"><svg class="ic " style="" width="32" height="32" viewBox="0 0 24 24" fill="none" stroke="currentColor" stroke-width="2" stroke-linecap="round" stroke-linejoin="round"><circle cx="11" cy="11" r="8"/><path d="m21 21-4.3-4.3"/></svg></td><td class="dt"><span class="d">15/10/2024</span><span class="tm">16:41:52</span></td><td class="dt"><span class="d">14/10/2024</span><span class="tm">12:12:20</span></td><td><span style="letter-spacing:-0.24px">Signée</span></td><td><span style="letter-spacing:-0.06px">Mandat de Vente</span></td><td style="padding-right:24px"><span style="letter-spacing:0.05px">N° 20 292 - Pouillon Vente Terrains à bâtir</span></td><td class="cu"><svg class="av fr" width="53" height="53" viewBox="0 0 54 54"><clipPath id="av7"><circle cx="27" cy="27" r="23.6"/></clipPath><circle cx="27" cy="27" r="27" fill="#e9ab34"/><g clip-path="url(#av7)"><rect width="54" height="54" fill="#efefef"/><rect y="10" width="54" height="2" fill="#c9c9c9"/><rect y="16" width="54" height="2.5" fill="#bdbdbd"/><rect y="23" width="54" height="2" fill="#d0d0d0"/><rect x="36" y="26" width="18" height="10" fill="#ddd6cb"/><path d="M17 14 C18 6 30 5 33 13 C35 20 34 28 36 34 L30 40 L20 40 L14 36 C17 30 16 22 17 14Z" fill="#b27f4f"/><ellipse cx="25" cy="20.5" rx="6.5" ry="8" fill="#dfae8e"/><path d="M18 19 C19 11 30 10 32 18 C28 14 22 14 18 19Z" fill="#a87445"/><path d="M16 54 L18 38 L24 33 L30 36 L40 32 L45 40 L42 54Z" fill="#1d1d20"/><path d="M24 33 L27 40 L30 34Z" fill="#dba98a"/><path d="M4 42 L22 38 L28 54 L6 54Z" fill="#d3d7da"/><path d="M28 47 L44 44 L46 50 L30 53Z" fill="#d9a685"/></g></svg></td></tr>
<tr style="height:130px"><td class="c0"><svg class="ic " style="" width="32" height="32" viewBox="0 0 24 24" fill="none" stroke="currentColor" stroke-width="2" stroke-linecap="round" stroke-linejoin="round"><circle cx="11" cy="11" r="8"/><path d="m21 21-4.3-4.3"/></svg></td><td class="dt"><span class="d">12/10/2024</span><span class="tm">19:27:38</span></td><td class="dt"><span class="d">12/10/2024</span><span class="tm">17:25:14</span></td><td><span style="letter-spacing:-0.24px">Signée</span></td><td><span style="letter-spacing:-0.08px">Offre d'achat</span></td><td style="padding-right:24px"><span style="letter-spacing:-0.51px">N°20284 - Olivier GRADZIK, Marie-Anne Francoise Genevieve BOUGUE - Sous Offre (Rejetée)</span></td><td class="cu"><svg class="av fr" width="53" height="53" viewBox="0 0 54 54"><clipPath id="av8"><circle cx="27" cy="27" r="23.6"/></clipPath><circle cx="27" cy="27" r="27" fill="#e9ab34"/><g clip-path="url(#av8)"><rect width="54" height="54" fill="#efefef"/><rect y="10" width="54" height="2" fill="#c9c9c9"/><rect y="16" width="54" height="2.5" fill="#bdbdbd"/><rect y="23" width="54" height="2" fill="#d0d0d0"/><rect x="36" y="26" width="18" height="10" fill="#ddd6cb"/><path d="M17 14 C18 6 30 5 33 13 C35 20 34 28 36 34 L30 40 L20 40 L14 36 C17 30 16 22 17 14Z" fill="#b27f4f"/><ellipse cx="25" cy="20.5" rx="6.5" ry="8" fill="#dfae8e"/><path d="M18 19 C19 11 30 10 32 18 C28 14 22 14 18 19Z" fill="#a87445"/><path d="M16 54 L18 38 L24 33 L30 36 L40 32 L45 40 L42 54Z" fill="#1d1d20"/><path d="M24 33 L27 40 L30 34Z" fill="#dba98a"/><path d="M4 42 L22 38 L28 54 L6 54Z" fill="#d3d7da"/><path d="M28 47 L44 44 L46 50 L30 53Z" fill="#d9a685"/></g></svg></td></tr>
<tr style="height:122px"><td class="c0"><svg class="ic " style="" width="32" height="32" viewBox="0 0 24 24" fill="none" stroke="currentColor" stroke-width="2" stroke-linecap="round" stroke-linejoin="round"><circle cx="11" cy="11" r="8"/><path d="m21 21-4.3-4.3"/></svg></td><td class="dt"><span class="d">12/10/2024</span><span class="tm">18:59:05</span></td><td class="dt"><span class="d">12/10/2024</span><span class="tm">17:11:01</span></td><td><span style="letter-spacing:-0.24px">Signée</span></td><td><span style="letter-spacing:-0.06px">Mandat de Vente</span></td><td style="padding-right:24px"><span style="letter-spacing:-0.09px">N° 2 694 - Priziac Vente Forêts</span></td><td class="cu"><svg class="av fr" width="53" height="53" viewBox="0 0 54 54"><clipPath id="av9"><circle cx="27" cy="27" r="23.6"/></clipPath><circle cx="27" cy="27" r="27" fill="#e9ab34"/><g clip-path="url(#av9)"><rect width="54" height="54" fill="#d2d2d5"/><rect width="9" height="54" fill="#5c5c60"/><rect x="45" width="5" height="54" fill="#7b716d"/><path d="M12 16 C12 6 24 3 32 7 C40 9 44 16 42 24 C36 20 28 20 24 26 C22 32 20 34 17 32 C13 28 12 22 12 16Z" fill="#4e3129"/><ellipse cx="31" cy="28" rx="8" ry="9.5" fill="#dbae9c" transform="rotate(-12 31 28)"/><path d="M22 25 C25 18 36 17 41 23 C35 21 28 22 22 25Z" fill="#4e3129"/><path d="M18 54 L22 40 L30 44 L38 40 L42 54Z" fill="#f1f1f1"/><path d="M8 54 L14 42 L22 39 L26 54Z M36 54 L38 40 L44 38 L48 54Z" fill="#2a2430"/></g></svg></td></tr>
<tr style="height:122px"><td class="c0"><svg class="ic " style="" width="32" height="32" viewBox="0 0 24 24" fill="none" stroke="currentColor" stroke-width="2" stroke-linecap="round" stroke-linejoin="round"><circle cx="11" cy="11" r="8"/><path d="m21 21-4.3-4.3"/></svg></td><td class="dt"><span class="d">11/10/2024</span><span class="tm">12:38:49</span></td><td class="dt"><span class="d">11/10/2024</span><span class="tm">12:38:23</span></td><td><span style="letter-spacing:0.20px">En cours (1/5)</span></td><td><span style="letter-spacing:-0.06px">Mandat de Vente</span></td><td style="padding-right:24px"><span style="letter-spacing:0.12px">N° 2 690 - Anglet Vente Appartement 2 pièce(s)</span></td><td class="cu"><svg class="av" width="53" height="53" viewBox="0 0 54 54"><clipPath id="av10"><circle cx="27" cy="27" r="23.6"/></clipPath><circle cx="27" cy="27" r="27" fill="#a3b55c"/><g clip-path="url(#av10)"><rect width="54" height="54" fill="#7f878e"/><rect width="20" height="54" fill="#667079"/><path d="M17 14 C19 6 34 5 37 14 C39 22 38 30 39 38 L30 46 L20 52 L10 44 C15 38 16 24 17 14Z" fill="#5f4533"/><ellipse cx="27.5" cy="23" rx="7.5" ry="9.5" fill="#e3b8a2"/><path d="M19 22 C20 12 33 11 36 20 C32 16 24 15 19 22Z" fill="#553d2d"/><path d="M24 32 L31 32 L33 40 L22 40Z" fill="#ddb09a"/><path d="M22 54 L28 44 L33 36 C40 36 46 40 48 46 L44 54Z" fill="#2b2527"/><path d="M10 44 C15 40 20 40 24 42 L22 54 L12 54Z" fill="#5f4533"/></g></svg></td></tr>
</table>
</body></html>
